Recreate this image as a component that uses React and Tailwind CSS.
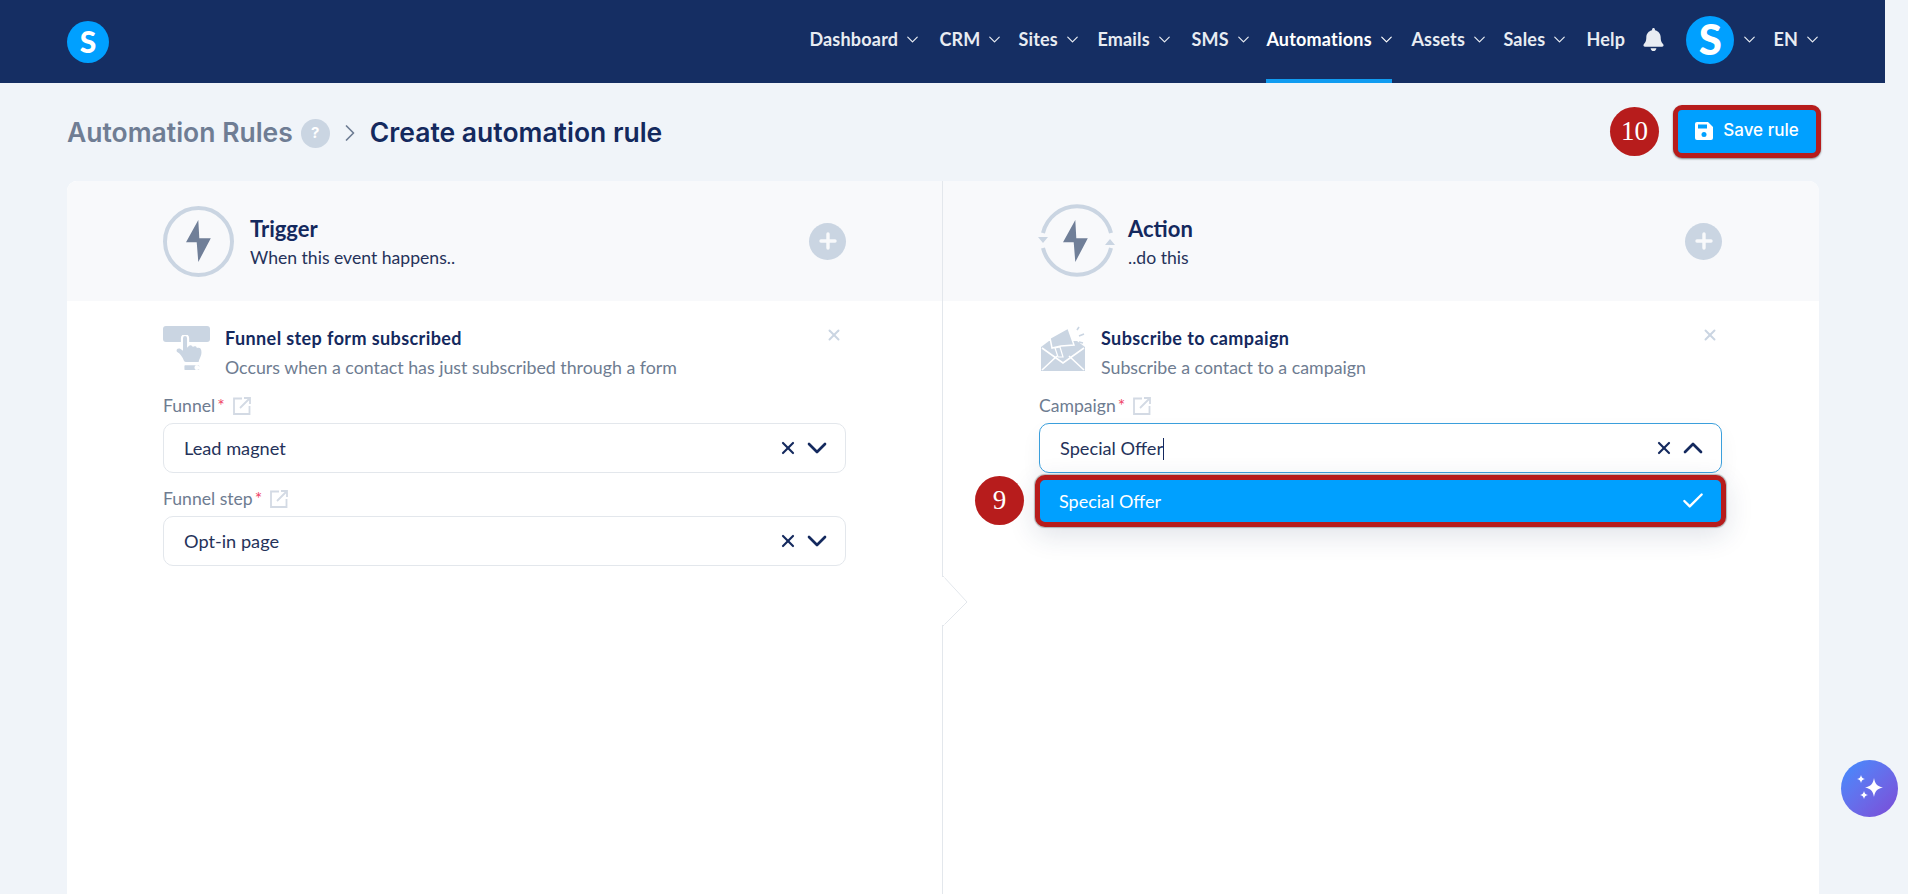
import React from 'react';
import { X, ChevronDown, ChevronUp, ChevronRight, Check, Plus } from 'lucide-react';
import { FaBell, FaHandPointUp } from 'react-icons/fa';

const navItems = [
  { label: 'Dashboard', w: 'w-[130px]' },
  { label: 'CRM', w: 'w-[79px]' },
  { label: 'Sites', w: 'w-[79px]' },
  { label: 'Emails', w: 'w-[94px]' },
  { label: 'SMS', w: 'w-[75px]' },
  { label: 'Automations', w: 'w-[145px]', active: true },
  { label: 'Assets', w: 'w-[92px]' },
  { label: 'Sales', w: 'w-[83px]' },
];

const Bolt = () => (
  <svg width="25" height="42" viewBox="0 0 25 42">
    <path d="M12.3 0 0 22.3h10.7L12.3 42 24.8 18.3H13.3z" fill="#707f98" />
  </svg>
);

const OpenIcon = () => (
  <svg width="18" height="18" viewBox="0 0 18 18" fill="none" stroke="#d3dae4" strokeWidth="1.8" className="ml-2">
    <path d="M9 1.5H1v15.5h15.5V9" />
    <path d="M7 11 16.5 1.5M11 1h6v6" />
  </svg>
);

const Select = ({ value, open }) => (
  <div
    className={
      open
        ? 'mt-[5px] h-[50px] rounded-[10px] border border-[#3b9fdc] bg-white shadow-[0_10px_20px_rgba(30,50,90,0.06)] flex items-center pl-5 pr-[12px]'
        : 'mt-[5px] h-[50px] rounded-[10px] border border-[#e3e7ec] bg-white flex items-center pl-5 pr-[12px]'
    }
  >
    <span className="text-[18.2px] text-[#25325a] flex-1 flex items-center pt-[2px]">
      {value}
      {open && <span className="inline-block w-px h-[22px] bg-[#14295e]" />}
    </span>
    <X size={20} strokeWidth={2.6} className="text-[#14295e] mr-[3px]" />
    {open ? (
      <ChevronUp size={32} strokeWidth={2} className="text-[#14295e]" />
    ) : (
      <ChevronDown size={32} strokeWidth={2} className="text-[#14295e]" />
    )}
  </div>
);

const Label = ({ text }) => (
  <div className="h-6 flex items-center text-[17.6px] text-[#6e7c91]">
    {text}
    <span className="text-[#ef4668] ml-[2px]">*</span>
    <OpenIcon />
  </div>
);

const PanelHeader = ({ icon, title, sub }) => (
  <div className="h-[120px] bg-[#f8f9fb] flex items-center justify-between">
    <div className="flex items-center">
      {icon}
      <div className="ml-4 pt-1">
        <div className="text-[22px] font-bold text-[#14295e] leading-6">{title}</div>
        <div className="text-[17.6px] text-[#25325a] leading-6 mt-[5px]">{sub}</div>
      </div>
    </div>
    <div className="w-[37px] h-[37px] rounded-full bg-[#cad5e2] flex items-center justify-center">
      <Plus size={24} strokeWidth={3.4} className="text-[#f8f9fb]" />
    </div>
  </div>
);

const TriggerIcon = () => (
  <div className="w-[71px] h-[71px] rounded-full border-[4px] border-[#cad5e2] flex items-center justify-center">
    <Bolt />
  </div>
);

const ActionIcon = () => (
  <div className="relative w-[73px] h-[80px] flex items-center justify-center">
    <svg width="80" height="80" viewBox="0 0 80 80" fill="none" className="absolute -left-[2px] top-0">
      <path d="M6 32A35 35 0 0 1 74 32M6 47A35 35 0 0 0 74 47" stroke="#cad5e2" strokeWidth="4" />
      <path d="M1 36H11L6 42zM68 44H78L73 38z" fill="#cad5e2" />
    </svg>
    <div className="relative">
      <Bolt />
    </div>
  </div>
);

const FunnelIcon = () => (
  <div className="relative w-[46px] h-[46px] shrink-0">
    <div className="w-[47px] h-[16px] rounded-[3px] bg-[#cad5e2]" />
    <FaHandPointUp
      size={36}
      className="absolute left-[8px] top-[9px] text-[#cad5e2] stroke-white stroke-[30]"
    />
  </div>
);

const CampaignIcon = () => (
  <svg width="44" height="46" viewBox="0 0 44 46" className="shrink-0 ml-[2px]">
    <path d="M0 21 8 15H36L44 21V45H0z" fill="#cad5e2" />
    <path d="M1 44 16 30M43 44 28 30M1 22 22 37 43 22" fill="none" stroke="#fff" strokeWidth="1.6" />
    <path d="M9 12 27 2 33 19 20 20 11 22z" fill="#cad5e2" stroke="#fff" strokeWidth="1.5" />
    <path d="M14 22l3 9h5l-3-10z" fill="#cad5e2" stroke="#fff" strokeWidth="1.2" />
    <path d="M36 4l2-3M38 10l5-2M38 16l4 1" stroke="#cad5e2" strokeWidth="1.6" fill="none" />
  </svg>
);

const ItemHead = ({ icon, title, desc }) => (
  <div className="pt-[25px] flex relative">
    {icon}
    <div className="ml-4">
      <div className="text-[18px] tracking-[0.4px] font-bold text-[#14295e] leading-6">{title}</div>
      <div className="text-[17.8px] text-[#6e7c91] leading-6 mt-[5px] mb-[1px]">{desc}</div>
    </div>
    <X size={18} strokeWidth={2.6} className="absolute right-[3px] top-[25px] text-[#cad5e2]" />
  </div>
);

const Badge = ({ n, className }) => (
  <div
    className={
      'absolute w-[49px] h-[49px] rounded-full bg-[#b71c1c] text-white flex items-center justify-center text-[27px] font-["Liberation_Serif",serif] ' +
      className
    }
  >
    {n}
  </div>
);

export default function App() {
  return (
    <div className='relative h-[894px] overflow-hidden bg-[#f0f4f9] font-["Lato",sans-serif]'>
      <div className="w-[1885px]">
        <nav className="h-[83px] bg-[#152e63] flex items-center pl-[67px] pr-[63px]">
          <div className="w-[42px] h-[42px] rounded-full bg-[#00a0ff] text-white flex items-center justify-center text-[30px] font-black">
            S
          </div>
          <div className="ml-auto flex items-center h-full pb-1 text-[18px] tracking-[0.2px] font-bold text-[#e8ecf2]">
            {navItems.map((item) => (
              <div key={item.label} className={'relative h-full flex items-center ' + item.w + (item.active ? ' text-white' : '')}>
                <span>{item.label}</span>
                <ChevronDown size={19} strokeWidth={1.5} className="ml-[5px]" />
                {item.active && <div className="absolute left-0 -bottom-1 w-[126px] h-1 bg-[#109cf1]" />}
              </div>
            ))}
            <span className="w-[56px]">Help</span>
            <FaBell size={23} className="text-[#e8ecf2]" />
            <div className="ml-[21px] w-12 h-12 rounded-full bg-[#00a0ff] text-white flex items-center justify-center text-[42px] font-black">
              S
            </div>
            <ChevronDown size={19} strokeWidth={1.5} className="ml-[6px]" />
            <span className="ml-[14px]">EN</span>
            <ChevronDown size={19} strokeWidth={1.5} className="ml-[5px]" />
          </div>
        </nav>

        <div className='h-[98px] flex items-center pl-[67px] pr-[68px] font-["Inter",sans-serif]'>
          <div className="flex items-center pt-[2px]">
            <span className="text-[26.5px] font-semibold text-[#6f7d94]">Automation Rules</span>
            <span className="ml-2 w-[29px] h-[29px] rounded-full bg-[#cad5e2] text-white text-[15px] font-bold flex items-center justify-center">?</span>
            <ChevronRight size={28} strokeWidth={1.5} className="ml-[6px] text-[#6f7d94]" />
            <span className="ml-[6px] text-[26.5px] font-semibold text-[#14295e]">Create automation rule</span>
          </div>
          <div className="relative ml-auto -mr-[4px] w-[148px] h-[53px] rounded-[9px] border-[5px] border-[#b71c1c] bg-[#00a0ff] shadow-[0_1px_2px_rgba(0,0,0,0.45)] flex items-center justify-center text-white text-[17px] font-medium -mt-[2px]">
            <svg width="18" height="18" viewBox="0 0 18 18" className="mr-[10px]">
              <path d="M2 0H13L18 5V16a2 2 0 0 1-2 2H2a2 2 0 0 1-2-2V2a2 2 0 0 1 2-2z" fill="#fff" />
              <rect x="3" y="2.500" width="9" height="4" fill="#00a0ff" />
              <circle cx="9" cy="12.500" r="2.500" fill="#00a0ff" />
            </svg>
            Save rule
          </div>
        </div>

        <div className="ml-[67px] w-[1752px] h-[713px] rounded-t-[10px] overflow-hidden bg-white flex">
          <div className="relative w-[876px] pl-24 pr-24 bg-white border-r border-[#e3e7ec]">
            <div className="absolute inset-x-0 top-0 h-[120px] bg-[#f8f9fb]" />
            <div className="relative">
              <PanelHeader icon={<TriggerIcon />} title="Trigger" sub="When this event happens.." />
            </div>
            <ItemHead
              icon={<FunnelIcon />}
              title="Funnel step form subscribed"
              desc="Occurs when a contact has just subscribed through a form"
            />
            <div className="mt-[14px]">
              <Label text="Funnel" />
              <Select value="Lead magnet" />
            </div>
            <div className="mt-[14px]">
              <Label text="Funnel step" />
              <Select value="Opt-in page" />
            </div>
          </div>

          <div className="relative flex-1 pl-24 pr-[97px]">
            <div className="absolute inset-x-0 top-0 h-[120px] bg-[#f8f9fb]" />
            <div className="relative">
              <PanelHeader icon={<ActionIcon />} title="Action" sub="..do this" />
            </div>
            <ItemHead
              icon={<CampaignIcon />}
              title="Subscribe to campaign"
              desc="Subscribe a contact to a campaign"
            />
            <div className="relative mt-[14px]">
              <Label text="Campaign" />
              <Select value="Special Offer" open />
              <div className="absolute -left-1 -right-1 top-[81px] h-[52px] rounded-[10px] border-[5px] border-[#b71c1c] bg-[#00a0ff] shadow-[0_0_1px_1px_rgba(0,0,0,0.25),0_8px_28px_rgba(30,50,90,0.14)] flex items-center justify-between pl-[19px] pr-[15px] text-[18px] text-white">
                Special Offer
                <Check size={26} strokeWidth={2.2} />
              </div>
            </div>
          </div>
        </div>
      </div>

      {/* notch on the divider */}
      <svg width="28" height="52" viewBox="0 0 28 52" fill="none" className="absolute left-[942px] top-[576px]">
        <path d="M1 0 25 26 1 50" fill="#fff" stroke="#e3e7ec" strokeWidth="1" />
        <path d="M1 1V49" stroke="#fff" strokeWidth="3" />
      </svg>

      <Badge n="10" className="left-[1610px] top-[107px]" />
      <Badge n="9" className="left-[975px] top-[476px]" />

      <div className="absolute left-[1841px] top-[760px] w-[57px] h-[57px] rounded-full bg-gradient-to-br from-[#3a8dff] to-[#7a4ad6] flex items-center justify-center">
        <svg width="30" height="30" viewBox="0 0 30 30" fill="#fff">
          <path d="M19 4c1 6 3 8 9 9.500-6 1.500-8 3.500-9 9.500-1-6-3-8-9-9.500 6-1.500 8-3.500 9-9.500z" />
          <path d="M6 1c.5 2.500 1.500 3.500 4 4-2.500.5-3.500 1.500-4 4-.5-2.500-1.500-3.500-4-4 2.500-.5 3.500-1.500 4-4z" />
          <path d="M9 17c.5 2.500 1.500 3.500 4 4-2.500.5-3.500 1.500-4 4-.5-2.500-1.500-3.500-4-4 2.500-.5 3.500-1.500 4-4z" />
        </svg>
      </div>
    </div>
  );
}
